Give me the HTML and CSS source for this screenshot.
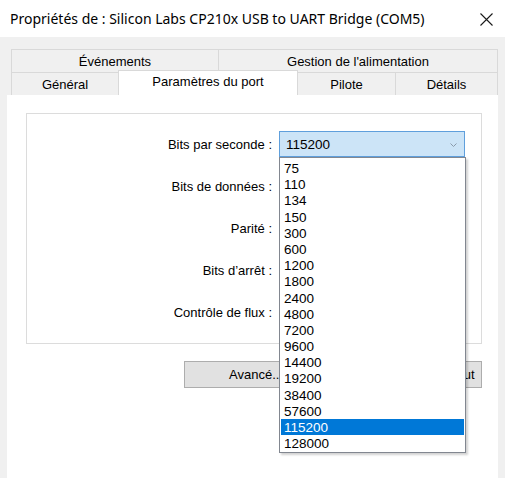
FILE: index.html
```html
<!DOCTYPE html>
<html lang="fr">
<head>
<meta charset="utf-8">
<title>Propriétés</title>
<link rel="stylesheet" href="styles.css">
</head>
<body>
<div class="window">
  <div class="titlebar">
    <span class="title">Propriétés de : Silicon Labs CP210x USB to UART Bridge (COM5)</span>
    <span class="close">
      <svg width="13" height="13" viewBox="0 0 13 13"><path d="M0.5 0.5 L12.5 12.5 M12.5 0.5 L0.5 12.5" stroke="#1a1a1a" stroke-width="1.1" fill="none"/></svg>
    </span>
  </div>
  <div class="client">
    <div class="tabs">
      <div class="tabrow">
        <div class="tab w-evt">Événements</div>
        <div class="tab w-gest">Gestion de l'alimentation</div>
      </div>
      <div class="tabrow">
        <div class="tab w-gen">Général</div>
        <div class="tab w-port active">Paramètres du port</div>
        <div class="tab w-pil">Pilote</div>
        <div class="tab w-det">Détails</div>
      </div>
    </div>
    <div class="panel">
      <div class="group">
        <div class="row">
          <label class="lbl">Bits par seconde :</label>
          <div class="combo-wrap">
            <div class="combo open">
              <span>115200</span>
              <svg class="chev" width="7" height="4" viewBox="0 0 7 4"><path d="M0.5 0.5 L3.5 3.5 L6.5 0.5" stroke="#8a9aab" fill="none"/></svg>
            </div>
            <ul class="list">
              <li>75</li><li>110</li><li>134</li><li>150</li><li>300</li><li>600</li>
              <li>1200</li><li>1800</li><li>2400</li><li>4800</li><li>7200</li><li>9600</li>
              <li>14400</li><li>19200</li><li>38400</li><li>57600</li>
              <li class="sel">115200</li><li>128000</li>
            </ul>
          </div>
        </div>
        <div class="row">
          <label class="lbl">Bits de données :</label>
          <div class="combo"></div>
        </div>
        <div class="row">
          <label class="lbl">Parité :</label>
          <div class="combo"></div>
        </div>
        <div class="row">
          <label class="lbl">Bits d’arrêt :</label>
          <div class="combo"></div>
        </div>
        <div class="row">
          <label class="lbl">Contrôle de flux :</label>
          <div class="combo"></div>
        </div>
      </div>
      <div class="buttons">
        <button class="btn">Avancé...</button>
        <button class="btn">Paramètres par défaut</button>
      </div>
    </div>
  </div>
</div>
</body>
</html>
```
FILE: styles.css
```css
* { box-sizing: border-box; }
html, body { margin: 0; padding: 0; }
body {
  width: 505px;
  height: 478px;
  overflow: hidden;
  background: #f0f0f0;
  font-family: "Liberation Sans", Arial, sans-serif;
  font-size: 13px;
  color: #000;
}
.window { display: flex; flex-direction: column; height: 478px; }
.titlebar {
  height: 37px;
  background: #fff;
  display: flex;
  align-items: center;
  padding-left: 10px;
  padding-right: 12px;
  justify-content: space-between;
}
.title {
  font-family: "Noto Sans", "Open Sans", sans-serif;
  font-size: 14px;
  color: #000;
  padding-bottom: 1px;
}
.close { display: flex; padding-top: 1px; }
.client { flex: 1; display: flex; flex-direction: column; }
.tabs { padding: 12px 0 0 11px; }
.tabrow { display: flex; height: 23px; }
.tab {
  border: 1px solid #d9d9d9;
  border-bottom: none;
  margin-right: -1px;
  display: flex;
  align-items: center;
  justify-content: center;
  background: #f0f0f0;
}
.w-evt { width: 208px; }
.w-gest { width: 280px; }
.w-gen { width: 108px; }
.w-port { width: 180px; }
.w-pil { width: 99px; }
.w-det { width: 103px; }
.tab.active {
  background: #fff;
  margin-top: -2px;
  height: 25px;
  position: relative;
  z-index: 1;
  padding-bottom: 4px;
}
.panel {
  flex: 1;
  background: #fff;
  margin: 0 7px 0 7px;
  padding: 18px 0 0 19px;
  display: flex;
  flex-direction: column;
  align-items: flex-start;
}
.group {
  width: 456px;
  height: 231px;
  border: 1px solid #dcdcdc;
  padding-top: 9px;
}
.row {
  display: grid;
  grid-template-columns: 245px 186px;
  column-gap: 7px;
  align-items: center;
  height: 42px;
}
.lbl { text-align: right; }
.combo-wrap { position: relative; z-index: 5; }
.combo {
  height: 26px;
  border: 1px solid #7a7a7a;
  background: #fff;
  display: flex;
  align-items: center;
  padding-left: 6px;
  font-size: 13.5px;
}
.combo.open {
  background: #cce4f7;
  border-color: #5f9fdc;
  justify-content: space-between;
  padding-right: 7px;
}
.chev { margin-top: 1px; }
.list {
  position: absolute;
  left: 0;
  top: 26px;
  width: 187px;
  margin: 0;
  padding: 2px 1px 1px 1px;
  list-style: none;
  background: #fff;
  border: 1px solid #828790;
  box-shadow: 2px 2px 2px rgba(0,0,0,0.18);
}
.list li {
  height: 16.2px;
  line-height: 17px;
  padding-left: 3px;
  font-size: 13.5px;
}
.list li.sel { background: #0078d7; color: #fff; }
.buttons {
  display: flex;
  gap: 10px;
  margin-top: 17px;
  margin-left: 158px;
}
.btn {
  width: 144px;
  height: 27px;
  background: #e1e1e1;
  border: 1px solid #adadad;
  font-family: "Liberation Sans", Arial, sans-serif;
  font-size: 13px;
  color: #000;
  padding: 0;
}
```
